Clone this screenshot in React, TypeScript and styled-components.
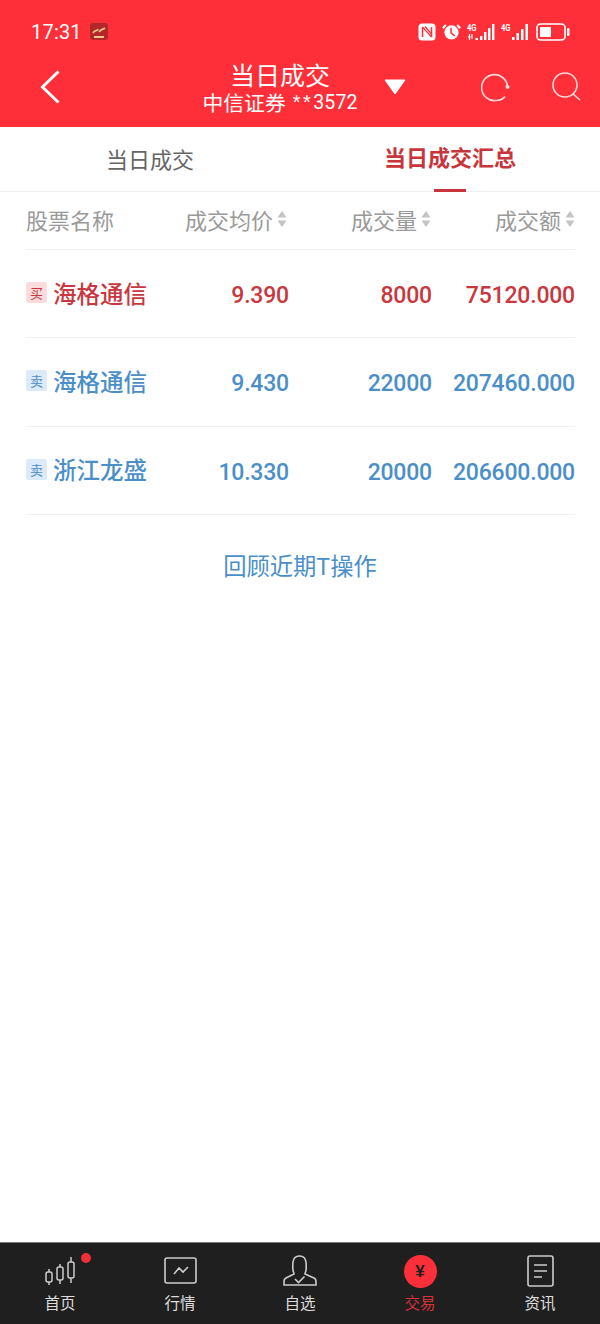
import { createGlobalStyle, styled } from "styled-components";

const GlobalStyle = createGlobalStyle`
  html, body {
    margin: 0;
    padding: 0;
    background: #ffffff;
  }
  body {
    font-family: "Noto Sans CJK SC", "Noto Sans", sans-serif;
  }
`;

const Page = styled.div`
  width: 600px;
  height: 1324px;
  display: flex;
  flex-direction: column;
  overflow: hidden;
`;

const Top = styled.header`
  height: 127px;
  flex: none;
  background: #fe2f38;
  color: #fff;
`;

const StatusBar = styled.div`
  height: 52px;
  padding: 11px 30px 0 31px;
  box-sizing: border-box;
  display: flex;
  align-items: center;
`;

const Time = styled.span`
  font-family: Roboto, sans-serif;
  font-size: 20px;
  letter-spacing: 0.2px;
  margin-right: 8px;
`;

const StatusIcons = styled.div`
  margin-left: auto;
  display: flex;
  align-items: center;
`;

const StatusIcon = styled.svg<{ $gap: number }>`
  margin-left: ${(p) => p.$gap}px;
`;

const NavBar = styled.div`
  height: 75px;
  box-sizing: border-box;
  padding: 0 0 5px 40px;
  display: flex;
  align-items: center;
`;

const TitleBlock = styled.div`
  width: 154px;
  margin-left: 143px;
  display: flex;
  flex-direction: column;
  align-items: center;
  white-space: nowrap;
`;

const Title = styled.div`
  font-size: 25px;
  line-height: 30px;
`;

const SubTitle = styled.div`
  font-size: 20.8px;
  line-height: 25px;
  margin-top: 1px;
  display: flex;
  align-items: center;
`;

const Stars = styled.span`
  font-family: "Liberation Sans", sans-serif;
  font-size: 20px;
  letter-spacing: 2.5px;
  margin-left: 7px;
`;

const SubNumber = styled.span`
  font-family: Roboto, sans-serif;
  font-size: 19.5px;
  letter-spacing: 0.1px;
`;

const Caret = styled.svg`
  margin-left: 27px;
`;

const NavIcon = styled.svg<{ $gap: number }>`
  margin-left: ${(p) => p.$gap}px;
`;

const Tabs = styled.nav`
  height: 64px;
  flex: none;
  display: grid;
  grid-template-columns: 1fr 1fr;
  border-bottom: 1px solid #efefef;
`;

const Tab = styled.div<{ $active?: boolean }>`
  position: relative;
  display: flex;
  justify-content: center;
  padding-top: ${(p) => (p.$active ? "12px" : "14px")};
  font-size: 22px;
  line-height: 34px;
  font-weight: ${(p) => (p.$active ? 700 : 400)};
  color: ${(p) => (p.$active ? "#c8363c" : "#666666")};
`;

const TabLine = styled.span`
  position: absolute;
  left: 134px;
  bottom: -1px;
  width: 32px;
  height: 3px;
  background: #c8363c;
`;

const Table = styled.section`
  margin: 0 25px 0 26px;
`;

const HeaderRow = styled.div`
  height: 58px;
  box-sizing: border-box;
  padding-bottom: 4px;
  display: grid;
  grid-template-columns: 120px 143px 143px 143px;
  align-items: center;
  border-bottom: 1px solid #f1f1f1;
  color: #999999;
  font-size: 22px;
`;

const HeaderCell = styled.div<{ $pad: number }>`
  display: flex;
  justify-content: flex-end;
  align-items: center;
  gap: 4px;
  padding-right: ${(p) => p.$pad}px;
`;

const NameHeader = styled.div`
  white-space: nowrap;
`;

const Row = styled.div<{ $tone: string }>`
  height: 88.33px;
  box-sizing: border-box;
  display: grid;
  grid-template-columns: 120px 143px 143px 143px;
  align-items: center;
  border-bottom: 1px solid #f1f1f1;
  color: ${(p) => p.$tone};
`;

const NameCell = styled.div`
  display: flex;
  align-items: center;
  gap: 6px;
  padding-bottom: 2px;
  font-size: 23.5px;
  font-weight: 500;
  white-space: nowrap;
`;

const SideBadge = styled.span<{ $bg: string }>`
  width: 21px;
  height: 21px;
  flex: none;
  border-radius: 2px;
  background: ${(p) => p.$bg};
  font-size: 13px;
  line-height: 21px;
  font-weight: 400;
  text-align: center;
`;

const NumberCell = styled.div`
  font-family: Roboto, sans-serif;
  font-weight: 500;
  font-size: 23px;
  letter-spacing: -0.2px;
  padding-top: 4px;
  text-align: right;
`;

const ReviewLink = styled.div`
  margin-top: 31px;
  text-align: center;
  font-size: 23.3px;
  line-height: 38px;
  color: #4b8fc9;
`;

const Spacer = styled.div`
  flex: 1;
`;

const BottomBar = styled.footer`
  height: 82px;
  flex: none;
  box-sizing: border-box;
  background: #1f1f1f;
  border-top: 1px solid #777777;
  display: grid;
  grid-template-columns: repeat(5, 120px);
`;

const BarItem = styled.div<{ $active?: boolean }>`
  position: relative;
  display: flex;
  flex-direction: column;
  align-items: center;
  color: ${(p) => (p.$active ? "#d9303a" : "#dddddd")};
  font-size: 15.5px;
`;

const BarIcon = styled.div`
  height: 36px;
  margin-top: 10px;
  display: flex;
  align-items: center;
  justify-content: center;
`;

const BarLabel = styled.span`
  line-height: 22px;
  margin-top: 2px;
`;

const Dot = styled.span`
  position: absolute;
  left: 81px;
  top: 10px;
  width: 10px;
  height: 10px;
  border-radius: 50%;
  background: #ef2f38;
`;

const YuanCircle = styled.span`
  width: 33px;
  height: 33px;
  border-radius: 50%;
  background: #fb2f3a;
  color: #1f1f1f;
  font-family: "Liberation Sans", sans-serif;
  font-size: 17px;
  font-weight: 700;
  line-height: 33px;
  text-align: center;
`;

function NfcIcon() {
  return (
    <StatusIcon $gap={0} width="18" height="18" viewBox="0 0 18 18" fill="none">
      <rect x="0.5" y="0.5" width="17" height="17" rx="3.5" fill="#fff" />
      <path d="M4.5 14V4M13.5 14V4" stroke="#fe2f38" strokeWidth="1.5" />
      <path d="M4.5 4l9 10M7 3.5l7 8" stroke="#fe2f38" strokeWidth="1.2" />
    </StatusIcon>
  );
}

function AlarmIcon() {
  return (
    <StatusIcon $gap={6} width="19" height="18" viewBox="0 0 20 18">
      <circle cx="10" cy="9.5" r="7.5" fill="#fff" />
      <path d="M1 5l3-3.5M19 5l-3-3.5" stroke="#fff" strokeWidth="2.2" />
      <path d="M9.5 4.5V10l4 3" stroke="#fe2f38" strokeWidth="1.6" fill="none" />
    </StatusIcon>
  );
}

function FourG() {
  return (
    <text
      x="0"
      y="7.5"
      fontSize="9"
      fontWeight="700"
      fontFamily="Roboto, sans-serif"
      fill="#fff"
      textLength="9.5"
      lengthAdjust="spacingAndGlyphs"
    >
      4G
    </text>
  );
}

function SignalOne() {
  return (
    <StatusIcon $gap={6} width="29" height="18" viewBox="0 0 29 18">
      <FourG />
      <path d="M1 14h2.500M2.500 11v6M5 11v5" stroke="#fff" strokeWidth="1.200" />
      <path d="M8.500 15h2.400v2H8.500zM13 13h2.400v4H13zM17 9h2.400v8H17zM21 5h2.400v12H21zM25 1h2.400v16H25z" fill="#fff" />
    </StatusIcon>
  );
}

function SignalTwo() {
  return (
    <StatusIcon $gap={5} width="29" height="18" viewBox="0 0 29 18">
      <FourG />
      <path d="M11 14h2.500v3H11zM15.500 10H18v7h-2.500zM20 6h2.500v11H20zM24.500 1H27v16h-2.500z" fill="#fff" />
    </StatusIcon>
  );
}

function BatteryIcon() {
  return (
    <StatusIcon $gap={6} width="34" height="18" viewBox="0 0 34 18">
      <rect x="1" y="1" width="28" height="16" rx="3.5" fill="none" stroke="#fff" strokeWidth="1.6" />
      <rect x="4" y="4" width="11" height="10" rx="1" fill="#fff" />
      <rect x="31" y="5" width="2.5" height="8" rx="1" fill="#fff" />
    </StatusIcon>
  );
}

const trades = [
  { side: "买", name: "海格通信", price: "9.390", volume: "8000", amount: "75120.000", tone: "#c9373f", bg: "#fbdcdc" },
  { side: "卖", name: "海格通信", price: "9.430", volume: "22000", amount: "207460.000", tone: "#4b8fc9", bg: "#dceafa" },
  { side: "卖", name: "浙江龙盛", price: "10.330", volume: "20000", amount: "206600.000", tone: "#4b8fc9", bg: "#dceafa" },
];

function SortMark() {
  return (
    <svg width="10" height="18" viewBox="0 0 10 18" fill="#c4c4c4">
      <path d="M5 1l4.500 6.500h-9zM5 17L.5 10.500h9z" />
    </svg>
  );
}

export default function App() {
  return (
    <Page>
      <GlobalStyle />
      <Top>
        <StatusBar>
          <Time>17:31</Time>
          <svg width="18" height="17" viewBox="0 0 18 17">
            <rect width="18" height="17" rx="3" fill="#b3262a" />
            <path d="M3 10c2-4 4-1 5-4M9 9c2-3 3-2 6-4M4 14h10" stroke="#eec68a" strokeWidth="1.800" fill="none" />
          </svg>
          <StatusIcons>
            <NfcIcon />
            <AlarmIcon />
            <SignalOne />
            <SignalTwo />
            <BatteryIcon />
          </StatusIcons>
        </StatusBar>
        <NavBar>
          <svg width="20" height="34" viewBox="0 0 20 34" fill="none" stroke="#fff" strokeWidth="3">
            <path d="M18.500 1.500L2.500 17l16 15.500" />
          </svg>
          <TitleBlock>
            <Title>当日成交</Title>
            <SubTitle>
              中信证券
              <Stars>**</Stars>
              <SubNumber>3572</SubNumber>
            </SubTitle>
          </TitleBlock>
          <Caret width="22" height="16" viewBox="0 0 22 16">
            <path d="M1 1h20L11 15z" fill="#fff" stroke="#fff" strokeLinejoin="round" />
          </Caret>
          <NavIcon $gap={75} width="30" height="30" viewBox="0 0 30 30" fill="none" stroke="#ffdcdc" strokeWidth="1.600">
            <path d="M26.500 15.500A13 13 0 1 0 15 28.500C19 28.500 22 27 24 24.500" />
            <circle cx="26.500" cy="15" r="2" fill="#ffdcdc" stroke="none" />
          </NavIcon>
          <NavIcon $gap={40} width="30" height="30" viewBox="0 0 30 30" fill="none" stroke="#ffdcdc" strokeWidth="1.600">
            <circle cx="14" cy="13" r="12" />
            <path d="M22 22l7 6" />
          </NavIcon>
        </NavBar>
      </Top>
      <Tabs>
        <Tab>当日成交</Tab>
        <Tab $active>
          当日成交汇总
          <TabLine />
        </Tab>
      </Tabs>
      <Table>
        <HeaderRow>
          <NameHeader>股票名称</NameHeader>
          <HeaderCell $pad={2}>
            成交均价
            <SortMark />
          </HeaderCell>
          <HeaderCell $pad={1}>
            成交量
            <SortMark />
          </HeaderCell>
          <HeaderCell $pad={0}>
            成交额
            <SortMark />
          </HeaderCell>
        </HeaderRow>
        {trades.map((t) => (
          <Row key={t.name + t.price} $tone={t.tone}>
            <NameCell>
              <SideBadge $bg={t.bg}>{t.side}</SideBadge>
              {t.name}
            </NameCell>
            <NumberCell>{t.price}</NumberCell>
            <NumberCell>{t.volume}</NumberCell>
            <NumberCell>{t.amount}</NumberCell>
          </Row>
        ))}
      </Table>
      <ReviewLink>回顾近期T操作</ReviewLink>
      <Spacer />
      <BottomBar>
        <BarItem>
          <BarIcon>
            <svg width="30" height="28" viewBox="0 0 30 28" fill="none" stroke="#cccccc" strokeWidth="1.500">
              <rect x="1" y="15" width="6" height="10" rx="2" />
              <path d="M4 12v3M4 25v3" />
              <rect x="12" y="10" width="6" height="13" rx="2" />
              <path d="M15 7v3M15 23v4" />
              <rect x="23" y="5" width="6" height="16" rx="2" />
              <path d="M26 0v5M26 21v5" />
            </svg>
          </BarIcon>
          <BarLabel>首页</BarLabel>
          <Dot />
        </BarItem>
        <BarItem>
          <BarIcon>
            <svg width="33" height="28" viewBox="0 0 33 28" fill="none" stroke="#cccccc" strokeWidth="1.600">
              <rect x="1" y="1" width="31" height="25" rx="2" />
              <path d="M10 17l5-6 4 4 5-5" />
            </svg>
          </BarIcon>
          <BarLabel>行情</BarLabel>
        </BarItem>
        <BarItem>
          <BarIcon>
            <svg width="34" height="32" viewBox="0 0 34 32" fill="none" stroke="#cccccc" strokeWidth="1.600">
              <path d="M10 15C9 5 11 1 16.500 1S24 5 23 15c0 2-1 2-1 4l9 4c2 1 2 2 2 7H1c0-5 0-6 2-7l8-4c0-2-1-2-1-4z" />
              <path d="M12 24l3.500 3.500 6-6" />
            </svg>
          </BarIcon>
          <BarLabel>自选</BarLabel>
        </BarItem>
        <BarItem $active>
          <BarIcon>
            <YuanCircle>¥</YuanCircle>
          </BarIcon>
          <BarLabel>交易</BarLabel>
        </BarItem>
        <BarItem>
          <BarIcon>
            <svg width="27" height="32" viewBox="0 0 27 32" fill="none" stroke="#cccccc" strokeWidth="1.600">
              <rect x="1" y="1" width="25" height="30" rx="2" />
              <path d="M7 10h13M7 16h13M7 22h8" />
            </svg>
          </BarIcon>
          <BarLabel>资讯</BarLabel>
        </BarItem>
      </BottomBar>
    </Page>
  );
}
